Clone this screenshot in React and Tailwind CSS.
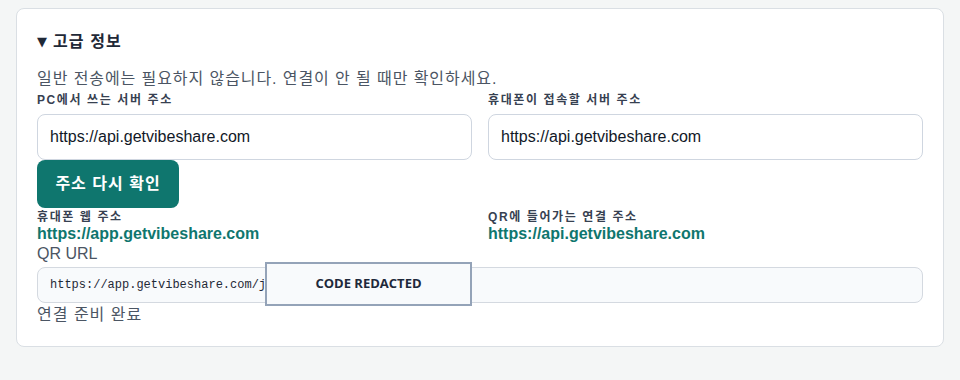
export default function App() {
    return (
        <div className="min-h-screen bg-[#f4f6f6] pt-2 px-4 font-['Liberation_Sans','Noto_Sans_CJK_KR',sans-serif]">
            <div className="rounded-lg border border-[#dadfe4] bg-white px-5 pt-[21px] pb-[19px]">
                {/* 고급 정보 */}
                <div className="flex items-center text-base leading-6 font-bold text-[#1f2937] tracking-[1.1px]">
                    <span className="w-4 font-['DejaVu_Sans',sans-serif] text-[13px] tracking-normal">▼</span>고급 정보
                </div>
                <p className="mt-[13px] text-base leading-6 text-[#4b5563] tracking-[0.92px]">일반 전송에는 필요하지 않습니다. 연결이 안 될 때만 확인하세요.</p>

                <div className="grid grid-cols-2 gap-x-4">
                    <label className="text-xs leading-[18px] font-bold text-[#374151] tracking-[1.6px] mb-[5px]">PC에서 쓰는 서버 주소</label>
                    <label className="text-xs leading-[18px] font-bold text-[#374151] tracking-[1.6px] mb-[5px]">휴대폰이 접속할 서버 주소</label>
                    <input
                        className="h-[46px] rounded-lg border border-[#cfd6e0] px-3 text-base text-[#111827] outline-none"
                        defaultValue="https://api.getvibeshare.com"
                    />
                    <input
                        className="h-[46px] rounded-lg border border-[#cfd6e0] px-3 text-base text-[#111827] outline-none"
                        defaultValue="https://api.getvibeshare.com"
                    />
                </div>

                <button className="h-12 w-[142px] rounded-lg bg-[#0f766e] text-base font-bold text-white tracking-[1px]">주소 다시 확인</button>

                <div className="grid grid-cols-2 gap-x-4">
                    <div>
                        <div className="text-xs leading-[18px] font-bold text-[#374151] tracking-[1.6px]">휴대폰 웹 주소</div>
                        <div className="text-base leading-4 font-bold text-[#0f766e]">https://app.getvibeshare.com</div>
                    </div>
                    <div>
                        <div className="text-xs leading-[18px] font-bold text-[#374151] tracking-[1.6px]">QR에 들어가는 연결 주소</div>
                        <div className="text-base leading-4 font-bold text-[#0f766e]">https://api.getvibeshare.com</div>
                    </div>
                </div>

                <div className="text-base leading-6 text-[#4b5563]">QR URL</div>
                <div className="relative mt-px flex h-9 items-center rounded-lg border border-[#d4d9e0] bg-[#f8fafc] px-3 font-['Liberation_Mono',monospace] text-xs text-[#1f2937]">
                    https://app.getvibeshare.com/j/
                    <div className="absolute left-[227px] top-[-6px] flex h-[44px] w-[207px] items-center justify-center border-2 border-[#94a3b8] bg-[#f8fafc] font-['Open_Sans',sans-serif] text-[13px] font-bold text-[#1e293b]">
                        CODE REDACTED
                    </div>
                </div>
                <div className="text-base leading-6 text-[#4b5563] tracking-[1px]">연결 준비 완료</div>
            </div>
        </div>
    )
}
